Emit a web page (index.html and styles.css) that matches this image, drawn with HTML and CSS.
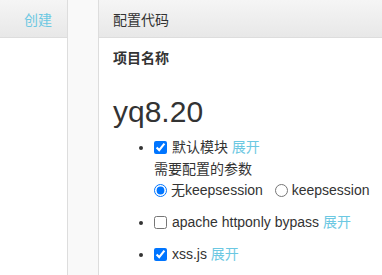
FILE: index.html
```html
<!DOCTYPE html>
<html lang="zh">
<head>
<meta charset="utf-8">
<title>配置代码</title>
<link rel="stylesheet" href="styles.css">
</head>
<body>
<div class="layout">
  <aside class="side">
    <div class="side-head"><a class="link" href="#">创建</a></div>
  </aside>
  <div class="strip"></div>
  <main class="panel">
    <div class="panel-head">配置代码</div>
    <div class="panel-body">
      <div class="label">项目名称</div>
      <h1 class="title">yq8.20</h1>
      <ul class="mods">
        <li>
          <label><input type="checkbox" checked> 默认模块</label> <a class="link" href="#">展开</a>
          <div class="params">需要配置的参数</div>
          <div class="radios">
            <label><input type="radio" name="ks" checked>无keepsession</label>
            <label class="r2"><input type="radio" name="ks">keepsession</label>
          </div>
        </li>
        <li><label><input type="checkbox"> apache httponly bypass</label> <a class="link" href="#">展开</a></li>
        <li><label><input type="checkbox" checked> xss.js</label> <a class="link" href="#">展开</a></li>
      </ul>
    </div>
  </main>
</div>
</body>
</html>
```
FILE: styles.css
```css
html, body {
  margin: 0;
  padding: 0;
  background: #fff;
  overflow: hidden;
}
body {
  font-family: "Liberation Sans", Arial, "Noto Sans CJK SC", sans-serif;
  font-size: 14px;
  color: #333;
}
.layout {
  display: flex;
  height: 275px;
}
.side {
  width: 67px;
  flex: none;
}
.side-head, .panel-head {
  height: 37px;
  border-bottom: 1px solid #ddd;
  background: linear-gradient(#f5f5f5, #e8e8e8);
  display: flex;
  align-items: center;
}
.side-head {
  justify-content: flex-end;
  padding-right: 15px;
}
.strip {
  width: 30px;
  flex: none;
  background: #f9f9f9;
  border-left: 1px solid #dddddd;
  border-right: 1px solid #dddddd;
}
.panel {
  flex: 1;
  min-width: 0;
}
.panel-head {
  padding-left: 14px;
}
.link {
  color: #6cc8e2;
  text-decoration: none;
}
.panel-body {
  padding: 10px 0 0 14px;
}
.label {
  font-weight: bold;
  line-height: 20px;
}
.title {
  font-size: 30px;
  font-weight: normal;
  line-height: 33px;
  margin: 27px 0 9px;
}
.mods {
  margin: 0;
  padding-left: 41px;
  line-height: 21.5px;
}
.mods li {
  margin-bottom: 10.5px;
}
.mods input {
  margin: 0 1px 0 0;
  width: 13px;
  height: 13px;
  vertical-align: -2px;
}
.radios {
  white-space: nowrap;
}
.radios input {
  margin: 0 4px 0 0;
}
.r2 {
  margin-left: 8px;
}
```
